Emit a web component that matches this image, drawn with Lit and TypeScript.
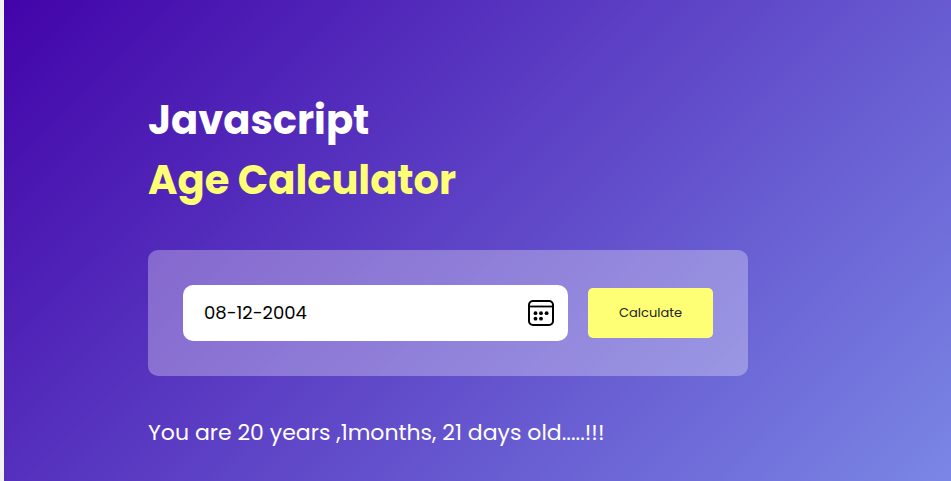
import { LitElement, html, css } from "lit";
import { customElement, state } from "lit/decorators.js";

@customElement("app-root")
export class AppRoot extends LitElement {
  static styles = css`
    :host {
      display: block;
      font-family: Poppins, Inter, "Open Sans", sans-serif;
    }
    * {
      box-sizing: border-box;
      margin: 0;
    }
    .page {
      min-height: 100vh;
      padding: 90px 24px 24px 144px;
      border-left: 4px solid #f1f3f4;
      color: #fff;
      background: linear-gradient(135deg, #4203a9, #90bafc 139%) border-box;
    }
    .calculator {
      max-width: 600px;
    }
    h1 {
      font-size: 40px;
      font-weight: 700;
      line-height: 60px;
    }
    .accent {
      display: block;
      color: #ffff76;
    }
    .input-box {
      display: flex;
      align-items: center;
      gap: 20px;
      margin: 40px 0;
      padding: 35px;
      border-radius: 10px;
      background: rgba(255, 255, 255, 0.3);
    }
    .field {
      flex: 1;
      min-width: 0;
      display: flex;
      align-items: center;
      height: 56px;
      padding: 0 12px 0 21px;
      border-radius: 10px;
      background: #fff;
    }
    .date {
      flex: 1;
      min-width: 0;
      padding: 0;
      border: 0;
      outline: 0;
      background: none;
      color: #000;
      font: 400 18px/26px Poppins, Inter, sans-serif;
    }
    .picker {
      display: flex;
      padding: 0;
      border: 0;
      background: none;
      cursor: pointer;
    }
    .calculate {
      width: 125px;
      height: 50px;
      padding: 0;
      border: 0;
      border-radius: 5px;
      background: #ffff76;
      color: #222;
      font: 400 13px/20px Poppins, Inter, sans-serif;
      cursor: pointer;
    }
    .result {
      font-size: 22px;
      line-height: 33px;
    }
  `;

  @state() private birth = "08-12-2004";
  @state() private result = "You are 20 years ,1months, 21 days old.....!!!";

  private onInput(e: Event) {
    this.birth = (e.target as HTMLInputElement).value;
  }

  private calculate() {
    const [d, m, y] = this.birth.split("-").map(Number);
    if (!d || !m || !y) return;
    const now = new Date();
    let days = now.getDate() - d;
    let months = now.getMonth() + 1 - m;
    let years = now.getFullYear() - y;
    if (days < 0) {
      months--;
      days += new Date(now.getFullYear(), now.getMonth(), 0).getDate();
    }
    if (months < 0) {
      years--;
      months += 12;
    }
    this.result = `You are ${years} years ,${months}months, ${days} days old.....!!!`;
  }

  render() {
    return html`
      <main class="page">
        <div class="calculator">
          <h1>Javascript <span class="accent">Age Calculator</span></h1>
          <div class="input-box">
            <div class="field">
              <input
                class="date"
                type="text"
                aria-label="Date of birth"
                .value=${this.birth}
                @input=${this.onInput}
              />
              <button class="picker" type="button" aria-label="Open calendar">
                <svg width="30" height="30" viewBox="0 0 30 30" aria-hidden="true">
                  <rect x="3" y="3" width="24" height="24" rx="4" fill="none" stroke="#000" stroke-width="2" />
                  <path d="M3 8.5H27" stroke="#000" stroke-width="1.8" />
                  <circle cx="9.5" cy="15.2" r="1.9" />
                  <circle cx="15" cy="15.2" r="1.9" />
                  <circle cx="20.6" cy="15.2" r="1.9" />
                  <circle cx="9.5" cy="20.7" r="1.9" />
                  <circle cx="15" cy="20.7" r="1.9" />
                </svg>
              </button>
            </div>
            <button class="calculate" type="button" @click=${this.calculate}>Calculate</button>
          </div>
          <p class="result">${this.result}</p>
        </div>
      </main>
    `;
  }
}
